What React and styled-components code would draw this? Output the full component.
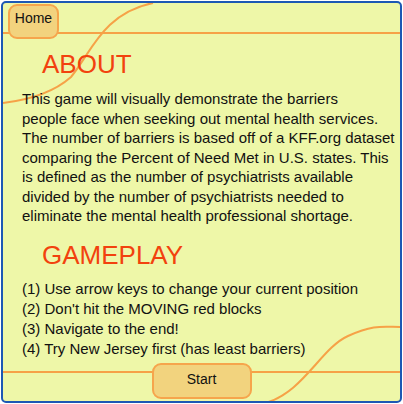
import React from 'react';
import styled, { createGlobalStyle } from 'styled-components';

const GlobalStyle = createGlobalStyle`
  html, body {
    margin: 0;
    padding: 0;
    background: #ffffff;
  }
  body {
    font-family: "Liberation Sans", Arial, sans-serif;
  }
`

const Frame = styled.div`
  position: relative;
  box-sizing: border-box;
  width: 401px;
  height: 402px;
  margin: 1px;
  border: 2px solid #1d58b4;
  border-radius: 5px;
  background: #eef7a8;
  overflow: hidden;
  display: flex;
  flex-direction: column;
`

const Decor = styled.svg`
  position: absolute;
  inset: 0;
  width: 100%;
  height: 100%;
  z-index: 0;
  pointer-events: none;
`

const Content = styled.div`
  position: relative;
  z-index: 1;
  flex: 1;
  display: flex;
  flex-direction: column;
`

const Header = styled.div`
  display: flex;
  padding: 1px 0 0 5px;
`

const NavButton = styled.button`
  box-sizing: border-box;
  width: ${({ wide }) => (wide ? '100px' : '51px')};
  height: ${({ wide }) => (wide ? '36px' : '35px')};
  padding: ${({ wide }) => (wide ? '6px 0 0' : '4px 0 0')};
  border: 2px solid #f6a54c;
  border-radius: 9px;
  background: #f2d37e;
  color: #111;
  font-family: "Liberation Sans", Arial, sans-serif;
  font-size: 14px;
  line-height: 16px;
  display: flex;
  justify-content: center;
  align-items: flex-start;
  cursor: pointer;
`

const Section = styled.section`
  padding: 0 0 0 19px;
`

const Heading = styled.h2`
  margin: ${({ top }) => top} 0 0 20px;
  font-family: "Liberation Sans", Arial, sans-serif;
  font-weight: normal;
  font-size: 26px;
  line-height: 26px;
  color: #f2420e;
`

const Paragraph = styled.p`
  margin: 12px 0 0;
  font-size: 15px;
  line-height: 19.5px;
  white-space: nowrap;
  color: #111;
`

const List = styled.ul`
  list-style: none;
  margin: 11px 0 0;
  padding: 0;
  font-size: 15px;
  line-height: 20px;
  color: #111;
`

const Footer = styled.div`
  margin-top: auto;
  display: flex;
  justify-content: center;
  padding-bottom: 2px;
`

const about = [
  'This game will visually demonstrate the barriers',
  'people face when seeking out mental health services.',
  'The number of barriers is based off of a KFF.org dataset',
  'comparing the Percent of Need Met in U.S. states. This',
  'is defined as the number of psychiatrists available',
  'divided by the number of psychiatrists needed to',
  'eliminate the mental health professional shortage.',
];

const rules = [
  '(1) Use arrow keys to change your current position',
  "(2) Don't hit the MOVING red blocks",
  '(3) Navigate to the end!',
  '(4) Try New Jersey first (has least barriers)',
];

export default function App() {
  return (
    <>
      <GlobalStyle />
      <Frame>
        <Decor viewBox="0 0 397 398" preserveAspectRatio="none">
          <g fill="none" stroke="#f6a247" strokeWidth="2">
            <line x1="0" y1="30" x2="397" y2="30" />
            <line x1="0" y1="369" x2="397" y2="369" />
            <path d="M150,0 C100,10 88,50 68,74 C50,90 25,97 0,100" />
            <path d="M262,400 C300,390 318,345 345,333 S380,324 398,324" />
          </g>
        </Decor>
        <Content>
          <Header>
            <NavButton>Home</NavButton>
          </Header>
          <Section>
            <Heading top="12px">ABOUT</Heading>
            <Paragraph>
              {about.map((line, i) => (
                <React.Fragment key={i}>
                  {line}
                  {i < about.length - 1 && <br />}
                </React.Fragment>
              ))}
            </Paragraph>
          </Section>
          <Section>
            <Heading top="16px">GAMEPLAY</Heading>
            <List>
              {rules.map((r) => (
                <li key={r}>{r}</li>
              ))}
            </List>
          </Section>
          <Footer>
            <NavButton wide>Start</NavButton>
          </Footer>
        </Content>
      </Frame>
    </>
  );
}
